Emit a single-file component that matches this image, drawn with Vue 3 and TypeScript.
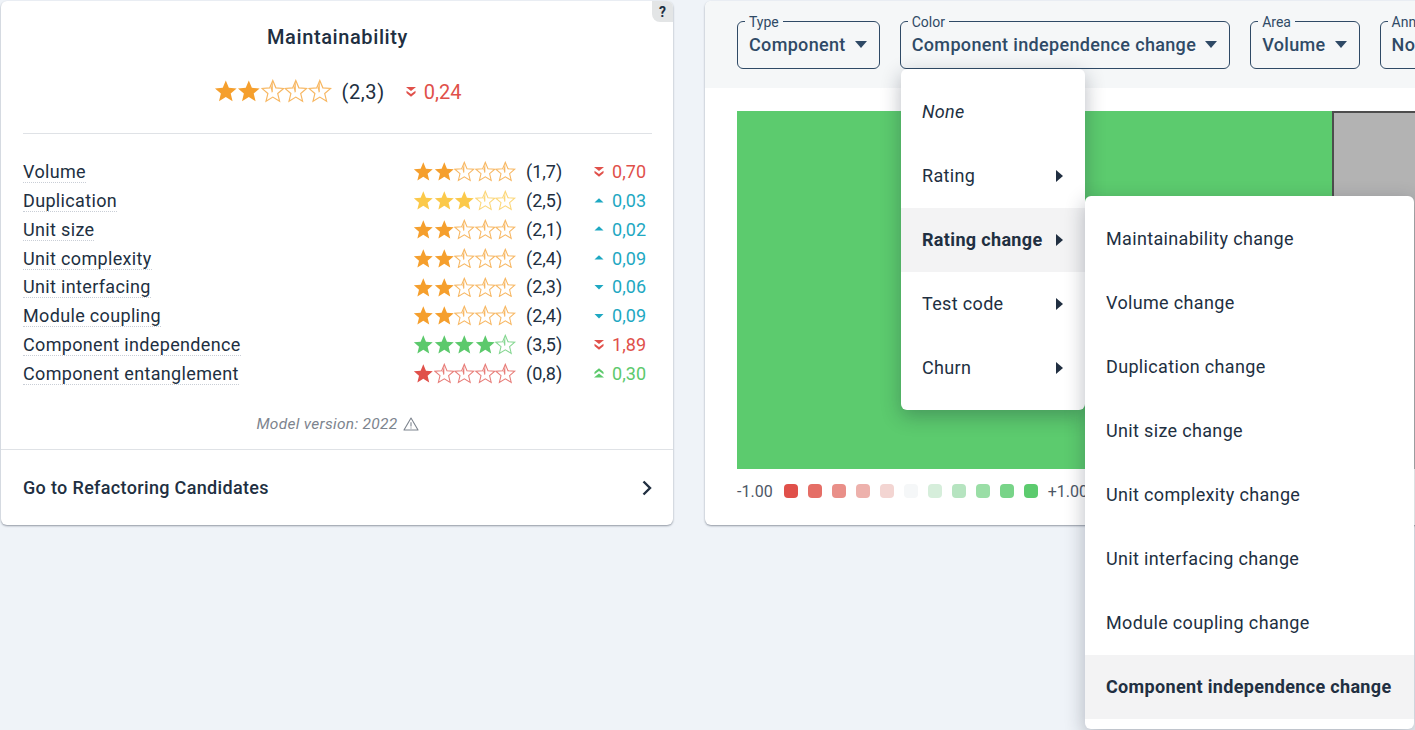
<template>
  <div class="page">
    <section class="card quality">
      <button class="help">?</button>
      <div class="quality-body">
        <h2>Maintainability</h2>
        <div class="overall">
          <span class="stars big">
            <svg v-for="n in 5" :key="n" viewBox="0 0 24 24" :style="{ color: starColor(2.3) }">
              <path v-if="n <= 2" :d="STAR" fill="currentColor" />
              <template v-else>
                <path :d="STAR" fill="#fff" stroke="currentColor" stroke-width="1.2" opacity="0.75" />
                <path :d="STAR_MARK" fill="currentColor" opacity="0.75" />
              </template>
            </svg>
          </span>
          <span class="score">(2,3)</span>
          <span class="delta red big-delta">
            <svg viewBox="0 0 12 12"><path :d="DOUBLE_DOWN" fill="currentColor" /></svg>
            0,24
          </span>
        </div>
        <hr />
        <div class="metrics">
          <div v-for="m in metrics" :key="m.name" class="metric">
            <span class="metric-name"><span>{{ m.name }}</span></span>
            <span class="stars">
              <svg v-for="n in 5" :key="n" viewBox="0 0 24 24" :style="{ color: starColor(m.rating) }">
                <path v-if="n <= m.filled" :d="STAR" fill="currentColor" />
                <template v-else>
                  <path :d="STAR" fill="#fff" stroke="currentColor" stroke-width="1.2" opacity="0.75" />
                  <path :d="STAR_MARK" fill="currentColor" opacity="0.75" />
                </template>
              </svg>
            </span>
            <span class="score">{{ m.score }}</span>
            <span class="delta" :class="m.tone">
              <svg viewBox="0 0 12 12"><path :d="ARROWS[m.arrow]" fill="currentColor" /></svg>
              <span>{{ m.delta }}</span>
            </span>
          </div>
        </div>
        <p class="model">
          Model version: 2022
          <svg viewBox="0 0 16 16" width="16" height="16">
            <path d="M8 2 L15 14 H1 Z" fill="none" stroke="currentColor" stroke-width="1.1" stroke-linejoin="round" />
            <path d="M8 6.2 V10.4 M8 11.4 V12.6" stroke="currentColor" stroke-width="1.1" />
          </svg>
        </p>
      </div>
      <a class="link-row">
        <span>Go to Refactoring Candidates</span>
        <svg viewBox="0 0 12 16" width="12" height="16">
          <path d="M2.5 1.5 L9 8 L2.5 14.5" fill="none" stroke="currentColor" stroke-width="2.4" />
        </svg>
      </a>
    </section>

    <section class="card chart">
      <div class="toolbar">
        <fieldset v-for="f in filters" :key="f.label" class="select">
          <legend>{{ f.label }}</legend>
          <span class="select-value">{{ f.value }}</span>
          <span class="caret"></span>
        </fieldset>
      </div>
      <div class="chart-body">
        <div class="treemap">
          <div class="tile-green"></div>
          <div class="tile-grey"></div>
        </div>
        <div class="legend">
          <span>-1.00</span>
          <i v-for="c in swatches" :key="c" :style="{ background: c }"></i>
          <span>+1.00</span>
        </div>
      </div>
    </section>

    <div class="menu first">
      <div
        v-for="item in colorMenu"
        :key="item.label"
        class="menu-item"
        :class="{ active: item.label === 'Rating change', none: item.label === 'None' }"
      >
        <span>{{ item.label }}</span>
        <span v-if="item.sub" class="sub-arrow"></span>
      </div>
    </div>
    <div class="menu second">
      <div
        v-for="item in changeMenu"
        :key="item"
        class="menu-item"
        :class="{ active: item === 'Component independence change' }"
      >
        {{ item }}
      </div>
    </div>
  </div>
</template>

<script setup lang="ts">
const STAR = "M12 1.5 L15.1 9 L23 9.6 L17 14.8 L18.9 22.6 L12 18.4 L5.1 22.6 L7 14.8 L1 9.6 L8.9 9 Z";
const STAR_MARK = "M12 2.5 L10 9.5 L11 14 L12 13 Z";
const DOUBLE_DOWN = "M1 1 H11 L6 5 Z M1.5 4.8 L6 8 L10.5 4.8 V7 L6 10.8 L1.5 7 Z";
const ARROWS: Record<string, string> = {
  doubleDown: DOUBLE_DOWN,
  doubleUp: "M6 1.2 L10.5 5 V7.2 L6 4 L1.5 7.2 V5 Z M6 6.5 L11 10.5 H1 Z",
  up: "M6 3.2 L10.5 7.6 H1.5 Z",
  down: "M1.5 4 H10.5 L6 8.4 Z",
};

interface Metric {
  name: string;
  rating: number;
  filled: number;
  score: string;
  delta: string;
  arrow: string;
  tone: string;
}

const metrics: Metric[] = [
  { name: "Volume", rating: 1.7, filled: 2, score: "(1,7)", delta: "0,70", arrow: "doubleDown", tone: "red" },
  { name: "Duplication", rating: 2.5, filled: 3, score: "(2,5)", delta: "0,03", arrow: "up", tone: "teal" },
  { name: "Unit size", rating: 2.1, filled: 2, score: "(2,1)", delta: "0,02", arrow: "up", tone: "teal" },
  { name: "Unit complexity", rating: 2.4, filled: 2, score: "(2,4)", delta: "0,09", arrow: "up", tone: "teal" },
  { name: "Unit interfacing", rating: 2.3, filled: 2, score: "(2,3)", delta: "0,06", arrow: "down", tone: "teal" },
  { name: "Module coupling", rating: 2.4, filled: 2, score: "(2,4)", delta: "0,09", arrow: "down", tone: "teal" },
  { name: "Component independence", rating: 3.5, filled: 4, score: "(3,5)", delta: "1,89", arrow: "doubleDown", tone: "red" },
  { name: "Component entanglement", rating: 0.8, filled: 1, score: "(0,8)", delta: "0,30", arrow: "doubleUp", tone: "green" },
];

const starColor = (r: number): string => {
  if (r >= 3.5) return "#5cc96c";
  if (r >= 2.5) return "#fbc94a";
  if (r >= 1.5) return "#f59f2d";
  return "#e0504a";
};

const filters = [
  { label: "Type", value: "Component" },
  { label: "Color", value: "Component independence change" },
  { label: "Area", value: "Volume" },
  { label: "Annotation", value: "None" },
];

const swatches = [
  "#e0504a", "#e56e66", "#e98f88", "#edb1ac", "#f3d5d2", "#f5f7f8",
  "#d6eedb", "#b6e4c0", "#9adea6", "#78d488", "#5ccb6e",
];

const colorMenu = [
  { label: "None", sub: false },
  { label: "Rating", sub: true },
  { label: "Rating change", sub: true },
  { label: "Test code", sub: true },
  { label: "Churn", sub: true },
];

const changeMenu = [
  "Maintainability change",
  "Volume change",
  "Duplication change",
  "Unit size change",
  "Unit complexity change",
  "Unit interfacing change",
  "Module coupling change",
  "Component independence change",
];
</script>

<style>
html,
body {
  margin: 0;
  height: 100%;
  overflow: hidden;
  background: #eff3f8;
}
</style>

<style scoped>
.page {
  position: relative;
  display: flex;
  gap: 32px;
  align-items: flex-start;
  width: 1415px;
  height: 730px;
  padding: 1px 0 0 1px;
  box-sizing: border-box;
  overflow: hidden;
  background: #eff3f8;
  font-family: Roboto, "Liberation Sans", sans-serif;
  letter-spacing: 0.34px;
  color: #212f41;
}

.card {
  position: relative;
  height: 524px;
  background: #fff;
  border-radius: 6px;
  box-shadow: 0 1px 2px rgba(30, 40, 60, 0.45);
  flex: none;
}

.quality {
  display: flex;
  flex-direction: column;
  width: 672px;
}

.help {
  position: absolute;
  top: 0;
  right: 0;
  width: 21px;
  height: 21px;
  padding: 0;
  border: 0;
  border-radius: 0 6px 0 8px;
  background: #e3e5e6;
  color: #212f41;
  font: 700 14px Roboto, sans-serif;
}

.quality-body {
  flex: 1;
  padding: 0 21px 0 22px;
}

h2 {
  margin: 0;
  padding-top: 23px;
  font-size: 20px;
  line-height: 26px;
  font-weight: 500;
  letter-spacing: 0.6px;
  text-align: center;
}

.overall {
  display: flex;
  align-items: center;
  justify-content: center;
  gap: 10px;
  margin-top: 27px;
  height: 30px;
  font-size: 20px;
}

.overall .score {
  width: auto;
  padding: 0;
  font-size: 20px;
  letter-spacing: 0.6px;
  margin-right: 10px;
}

.stars {
  display: flex;
  flex: none;
}

.stars svg {
  width: 20.6px;
  height: 20.6px;
}

.stars.big {
  margin-bottom: 2px;
}

.stars.big svg {
  width: 23.6px;
  height: 23.6px;
}

hr {
  margin: 26px 0 23.4px;
  border: 0;
  border-top: 1px solid #dfe2e6;
}

.metric {
  display: flex;
  align-items: center;
  height: 28.8px;
  font-size: 18px;
}

.metric-name {
  flex: 1;
}

.metric-name span {
  border-bottom: 1px dotted #c9ced6;
}

.score {
  width: 71px;
  padding-left: 10px;
  box-sizing: border-box;
  font-size: 18px;
  letter-spacing: 0;
}

.delta {
  display: flex;
  align-items: center;
  gap: 7px;
  width: 59px;
  justify-content: flex-end;
  margin-right: 6px;
  letter-spacing: 0;
}

.delta svg {
  width: 12px;
  height: 12px;
}

.big-delta {
  width: auto;
  margin: 0;
  font-size: 20px;
  gap: 7px;
}

.red {
  color: #e0504a;
}

.teal {
  color: #1ea8c2;
}

.green {
  color: #5cc96c;
}

.model {
  display: flex;
  align-items: center;
  justify-content: center;
  gap: 5px;
  margin: 27.6px 0 0;
  font-size: 15.5px;
  font-style: italic;
  letter-spacing: 0.3px;
  color: #7d848e;
}

.link-row {
  display: flex;
  align-items: center;
  justify-content: space-between;
  height: 75px;
  padding: 0 20px 0 22px;
  border-top: 1px solid #dfe2e6;
  font-size: 18px;
  font-weight: 500;
}

.chart {
  width: 800px;
  overflow: hidden;
}

.toolbar {
  display: flex;
  gap: 20px;
  height: 87px;
  padding: 0 0 0 32px;
  background: #f5f7f8;
  border-radius: 6px 6px 0 0;
  box-sizing: border-box;
}

.select {
  display: flex;
  align-items: center;
  gap: 9px;
  flex: none;
  height: 56px;
  margin: 12px 0 0;
  padding: 0 12px 8px 11px;
  box-sizing: border-box;
  border: 1px solid #2f4a66;
  border-radius: 6px;
  color: #2f4a66;
  font-weight: 500;
  font-size: 18px;
  letter-spacing: 0.34px;
  min-inline-size: auto;
}

legend {
  padding: 2px 4px 0;
  margin-left: -4px;
  font-size: 14px;
  font-weight: 400;
  line-height: 14px;
  letter-spacing: 0;
}

.caret {
  width: 0;
  height: 0;
  border-left: 6.5px solid transparent;
  border-right: 6.5px solid transparent;
  border-top: 7px solid #2f4a66;
}

.chart-body {
  padding: 23px 0 0 32px;
}

.treemap {
  display: flex;
  height: 358px;
  width: 760px;
}

.tile-green {
  width: 595px;
  background: #5ccb6e;
}

.tile-grey {
  flex: 1;
  background: #b3b3b3;
  border: 2px solid #4d4d4d;
  border-bottom: 0;
}

.legend {
  display: flex;
  align-items: center;
  gap: 10px;
  margin-top: 14px;
  height: 16px;
  font-size: 16px;
  letter-spacing: 0;
  color: #4d5766;
}

.legend span:first-child {
  margin-right: 1px;
}

.legend i {
  width: 14px;
  height: 14px;
  border-radius: 4px;
}

.menu {
  position: absolute;
  background: #fff;
  border-radius: 6px;
  box-sizing: border-box;
  box-shadow: 0 6px 20px rgba(20, 30, 50, 0.3);
  padding: 11px 0;
  font-size: 18px;
}

.first {
  left: 901px;
  top: 69px;
  width: 184px;
  height: 341px;
}

.second {
  left: 1085px;
  top: 196px;
  width: 329px;
  height: 533px;
}

.menu-item {
  display: flex;
  align-items: center;
  justify-content: space-between;
  height: 64px;
  padding: 0 22px 2px 21px;
  box-sizing: border-box;
  white-space: nowrap;
}

.active {
  background: #f3f3f4;
  font-weight: 700;
}

.none {
  font-style: italic;
}

.sub-arrow {
  width: 0;
  height: 0;
  margin-top: 2px;
  border-top: 6px solid transparent;
  border-bottom: 6px solid transparent;
  border-left: 7px solid #212f41;
}
</style>
